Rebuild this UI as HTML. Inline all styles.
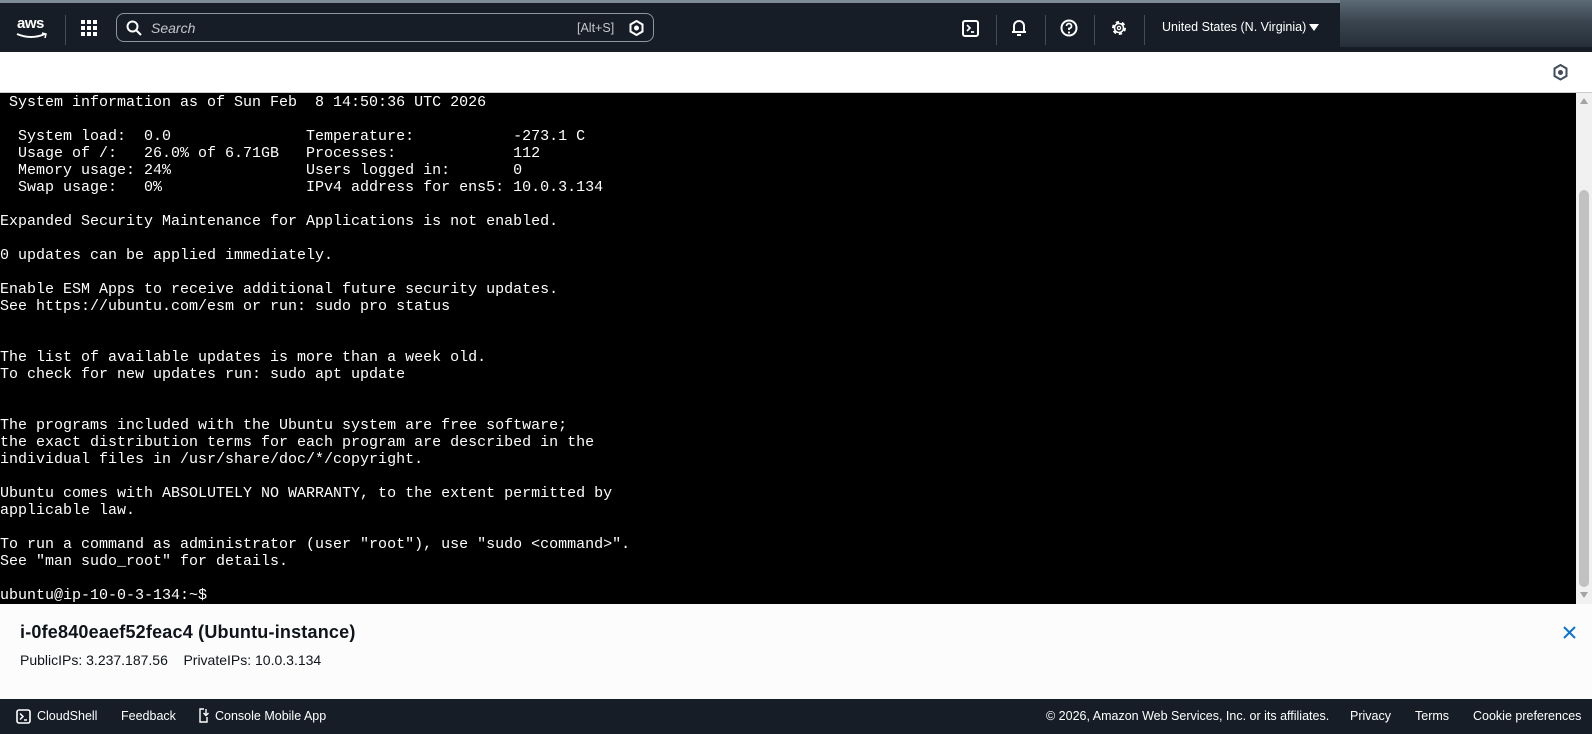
<!DOCTYPE html>
<html><head><meta charset="utf-8"><style>
*{margin:0;padding:0;box-sizing:border-box}
body{width:1592px;height:734px;overflow:hidden;background:#fff;font-family:"Liberation Sans",sans-serif;position:relative}
.top{position:absolute;left:0;top:0;width:1592px;height:52px;background:#161d26;border-top:3px solid #7d8b99}
.blur{position:absolute;left:1340px;top:0;width:252px;height:47px;background:linear-gradient(180deg,#5d6b77 0%,#3a4550 45%,#262f39 100%)}
.wbar{position:absolute;left:0;top:52px;width:1592px;height:41px;background:#fff;border-bottom:1px solid #ccc}
.term{position:absolute;left:0;top:93px;width:1576px;height:511px;background:#000;color:#fff;font-family:"Liberation Mono",monospace;font-size:15px;line-height:17px;white-space:pre;padding-top:1px}
.sb{position:absolute;left:1576px;top:93px;width:16px;height:511px;background:#f1f1f1}
.thumb{position:absolute;left:3px;top:97px;width:10px;height:397px;background:#c1c1c1;border-radius:5px}
.info{position:absolute;left:0;top:604px;width:1592px;height:95px;background:#fcfcfd}
.foot{position:absolute;left:0;top:699px;width:1592px;height:35px;background:#161d26;color:#fff;font-size:12.5px}
.foot span{position:absolute;top:10px}
.nav{color:#fff;font-size:12.5px}
.div{position:absolute;top:12px;width:1px;height:30px;background:#414d5c}
</style></head><body>
<div class="top">
 <div style="position:absolute;left:17px;top:12px;color:#fff;font-size:15px;font-weight:bold;letter-spacing:-0.5px">aws</div>
 <svg style="position:absolute;left:15px;top:29px" width="34" height="8"><path d="M2 2 Q16 8 30 2" stroke="#fff" stroke-width="2" fill="none"/><path d="M27 1 L31 2 L30 6" stroke="#fff" stroke-width="1.5" fill="none"/></svg>
 <div class="div" style="left:65px"></div>
 <svg style="position:absolute;left:81px;top:17px" width="16" height="16" fill="#fff"><rect x="0" y="0" width="4" height="4"/><rect x="6" y="0" width="4" height="4"/><rect x="12" y="0" width="4" height="4"/><rect x="0" y="6" width="4" height="4"/><rect x="6" y="6" width="4" height="4"/><rect x="12" y="6" width="4" height="4"/><rect x="0" y="12" width="4" height="4"/><rect x="6" y="12" width="4" height="4"/><rect x="12" y="12" width="4" height="4"/></svg>
 <div style="position:absolute;left:116px;top:10px;width:538px;height:29px;border:1px solid #8c96a3;border-radius:8px">
  <svg style="position:absolute;left:9px;top:6px" width="16" height="16"><circle cx="6.5" cy="6.5" r="5" stroke="#fff" stroke-width="2" fill="none"/><path d="M10 10 L15 15" stroke="#fff" stroke-width="2"/></svg>
  <div style="position:absolute;left:34px;top:6px;color:#c6c6cd;font-style:italic;font-size:14px">Search</div>
  <div style="position:absolute;left:460px;top:7px;color:#c6c6cd;font-size:12.5px">[Alt+S]</div>
  <svg style="position:absolute;left:512px;top:6px" width="15" height="16"><path d="M7.5 1 L13.5 4.5 L13.5 11.5 L7.5 15 L1.5 11.5 L1.5 4.5Z" stroke="#fff" stroke-width="2" fill="none"/><circle cx="7.5" cy="8" r="2.5" fill="#fff"/></svg>
 </div>
 <svg style="position:absolute;left:962px;top:17px" width="17" height="17"><rect x="1" y="1" width="15" height="15" rx="2" stroke="#fff" stroke-width="2" fill="none"/><path d="M5 5 L8 8 L5 11 M9 12 H12" stroke="#fff" stroke-width="1.7" fill="none"/></svg>
 <div class="div" style="left:996px"></div>
 <svg style="position:absolute;left:1011px;top:16px" width="16" height="18"><path d="M3 13 V7 A5 5 0 0 1 13 7 V13 H15 M1 13 H15 M6 16 H10" stroke="#fff" stroke-width="2" fill="none"/></svg>
 <div class="div" style="left:1045px"></div>
 <svg style="position:absolute;left:1060px;top:16px" width="18" height="18"><circle cx="9" cy="9" r="7.5" stroke="#fff" stroke-width="2" fill="none"/><path d="M6.5 7 A2.5 2.5 0 1 1 9 9.5 V11" stroke="#fff" stroke-width="1.8" fill="none"/><circle cx="9" cy="13.5" r="1.1" fill="#fff"/></svg>
 <div class="div" style="left:1094px"></div>
 <svg style="position:absolute;left:1110px;top:16px" width="18" height="18"><circle cx="9" cy="9" r="5.5" stroke="#fff" stroke-width="3" stroke-dasharray="3 2.7" fill="none"/><circle cx="9" cy="9" r="4.5" stroke="#fff" stroke-width="1.6" fill="none"/><circle cx="9" cy="9" r="1.6" stroke="#fff" stroke-width="1.3" fill="none"/></svg>
 <div class="div" style="left:1144px"></div>
 <div class="nav" style="position:absolute;left:1162px;top:17px">United States (N. Virginia)</div>
 <svg style="position:absolute;left:1309px;top:21px" width="10" height="8"><path d="M0 0 H10 L5 7Z" fill="#fff"/></svg>
</div>
<div class="blur"></div>
<div class="wbar">
 <svg style="position:absolute;left:1553px;top:12px" width="15" height="17"><path d="M7.5 1 L13.5 4.5 L13.5 12 L7.5 15.5 L1.5 12 L1.5 4.5Z" stroke="#414d5c" stroke-width="2" fill="none"/><circle cx="7.5" cy="8.5" r="2.5" fill="#414d5c"/></svg>
</div>
<div class="term"> System information as of Sun Feb  8 14:50:36 UTC 2026

  System load:  0.0               Temperature:           -273.1 C
  Usage of /:   26.0% of 6.71GB   Processes:             112
  Memory usage: 24%               Users logged in:       0
  Swap usage:   0%                IPv4 address for ens5: 10.0.3.134

Expanded Security Maintenance for Applications is not enabled.

0 updates can be applied immediately.

Enable ESM Apps to receive additional future security updates.
See https://ubuntu.com/esm or run: sudo pro status


The list of available updates is more than a week old.
To check for new updates run: sudo apt update


The programs included with the Ubuntu system are free software;
the exact distribution terms for each program are described in the
individual files in /usr/share/doc/*/copyright.

Ubuntu comes with ABSOLUTELY NO WARRANTY, to the extent permitted by
applicable law.

To run a command as administrator (user "root"), use "sudo &lt;command&gt;".
See "man sudo_root" for details.

ubuntu@ip-10-0-3-134:~$</div>
<div class="sb">
 <svg style="position:absolute;left:4px;top:5px" width="8" height="6"><path d="M0 6 L4 0 L8 6Z" fill="#a3a3a3"/></svg>
 <div class="thumb"></div>
 <svg style="position:absolute;left:4px;top:499px" width="8" height="6"><path d="M0 0 L8 0 L4 6Z" fill="#a3a3a3"/></svg>
</div>
<div class="info">
 <div style="position:absolute;left:20px;top:18px;font-size:18px;font-weight:bold;color:#0f141a;letter-spacing:0.2px">i-0fe840eaef52feac4 (Ubuntu-instance)</div>
 <div style="position:absolute;left:20px;top:48px;font-size:14px;color:#0f141a">PublicIPs: 3.237.187.56&nbsp;&nbsp;&nbsp; PrivateIPs: 10.0.3.134</div>
 <svg style="position:absolute;left:1563px;top:22px" width="13" height="13"><path d="M1 1 L12 12 M12 1 L1 12" stroke="#0972d3" stroke-width="2"/></svg>
</div>
<div class="foot">
 <svg style="position:absolute;left:16px;top:10px" width="15" height="15"><rect x="1" y="1" width="13" height="13" rx="2" stroke="#fff" stroke-width="1.6" fill="none"/><path d="M4 4.5 L7 7.5 L4 10.5 M8 11 H11" stroke="#fff" stroke-width="1.5" fill="none"/></svg>
 <span style="left:37px">CloudShell</span>
 <span style="left:121px">Feedback</span>
 <svg style="position:absolute;left:198px;top:9px" width="12" height="16"><path d="M6 1 H2 V14 H9 V9 M8 1 V7 M5.5 5 L8 7.5 L10.5 5" stroke="#fff" stroke-width="1.4" fill="none"/></svg>
 <span style="left:215px">Console Mobile App</span>
 <span style="left:1046px">© 2026, Amazon Web Services, Inc. or its affiliates.</span>
 <span style="left:1350px">Privacy</span>
 <span style="left:1415px">Terms</span>
 <span style="left:1473px">Cookie preferences</span>
</div>
</body></html>
